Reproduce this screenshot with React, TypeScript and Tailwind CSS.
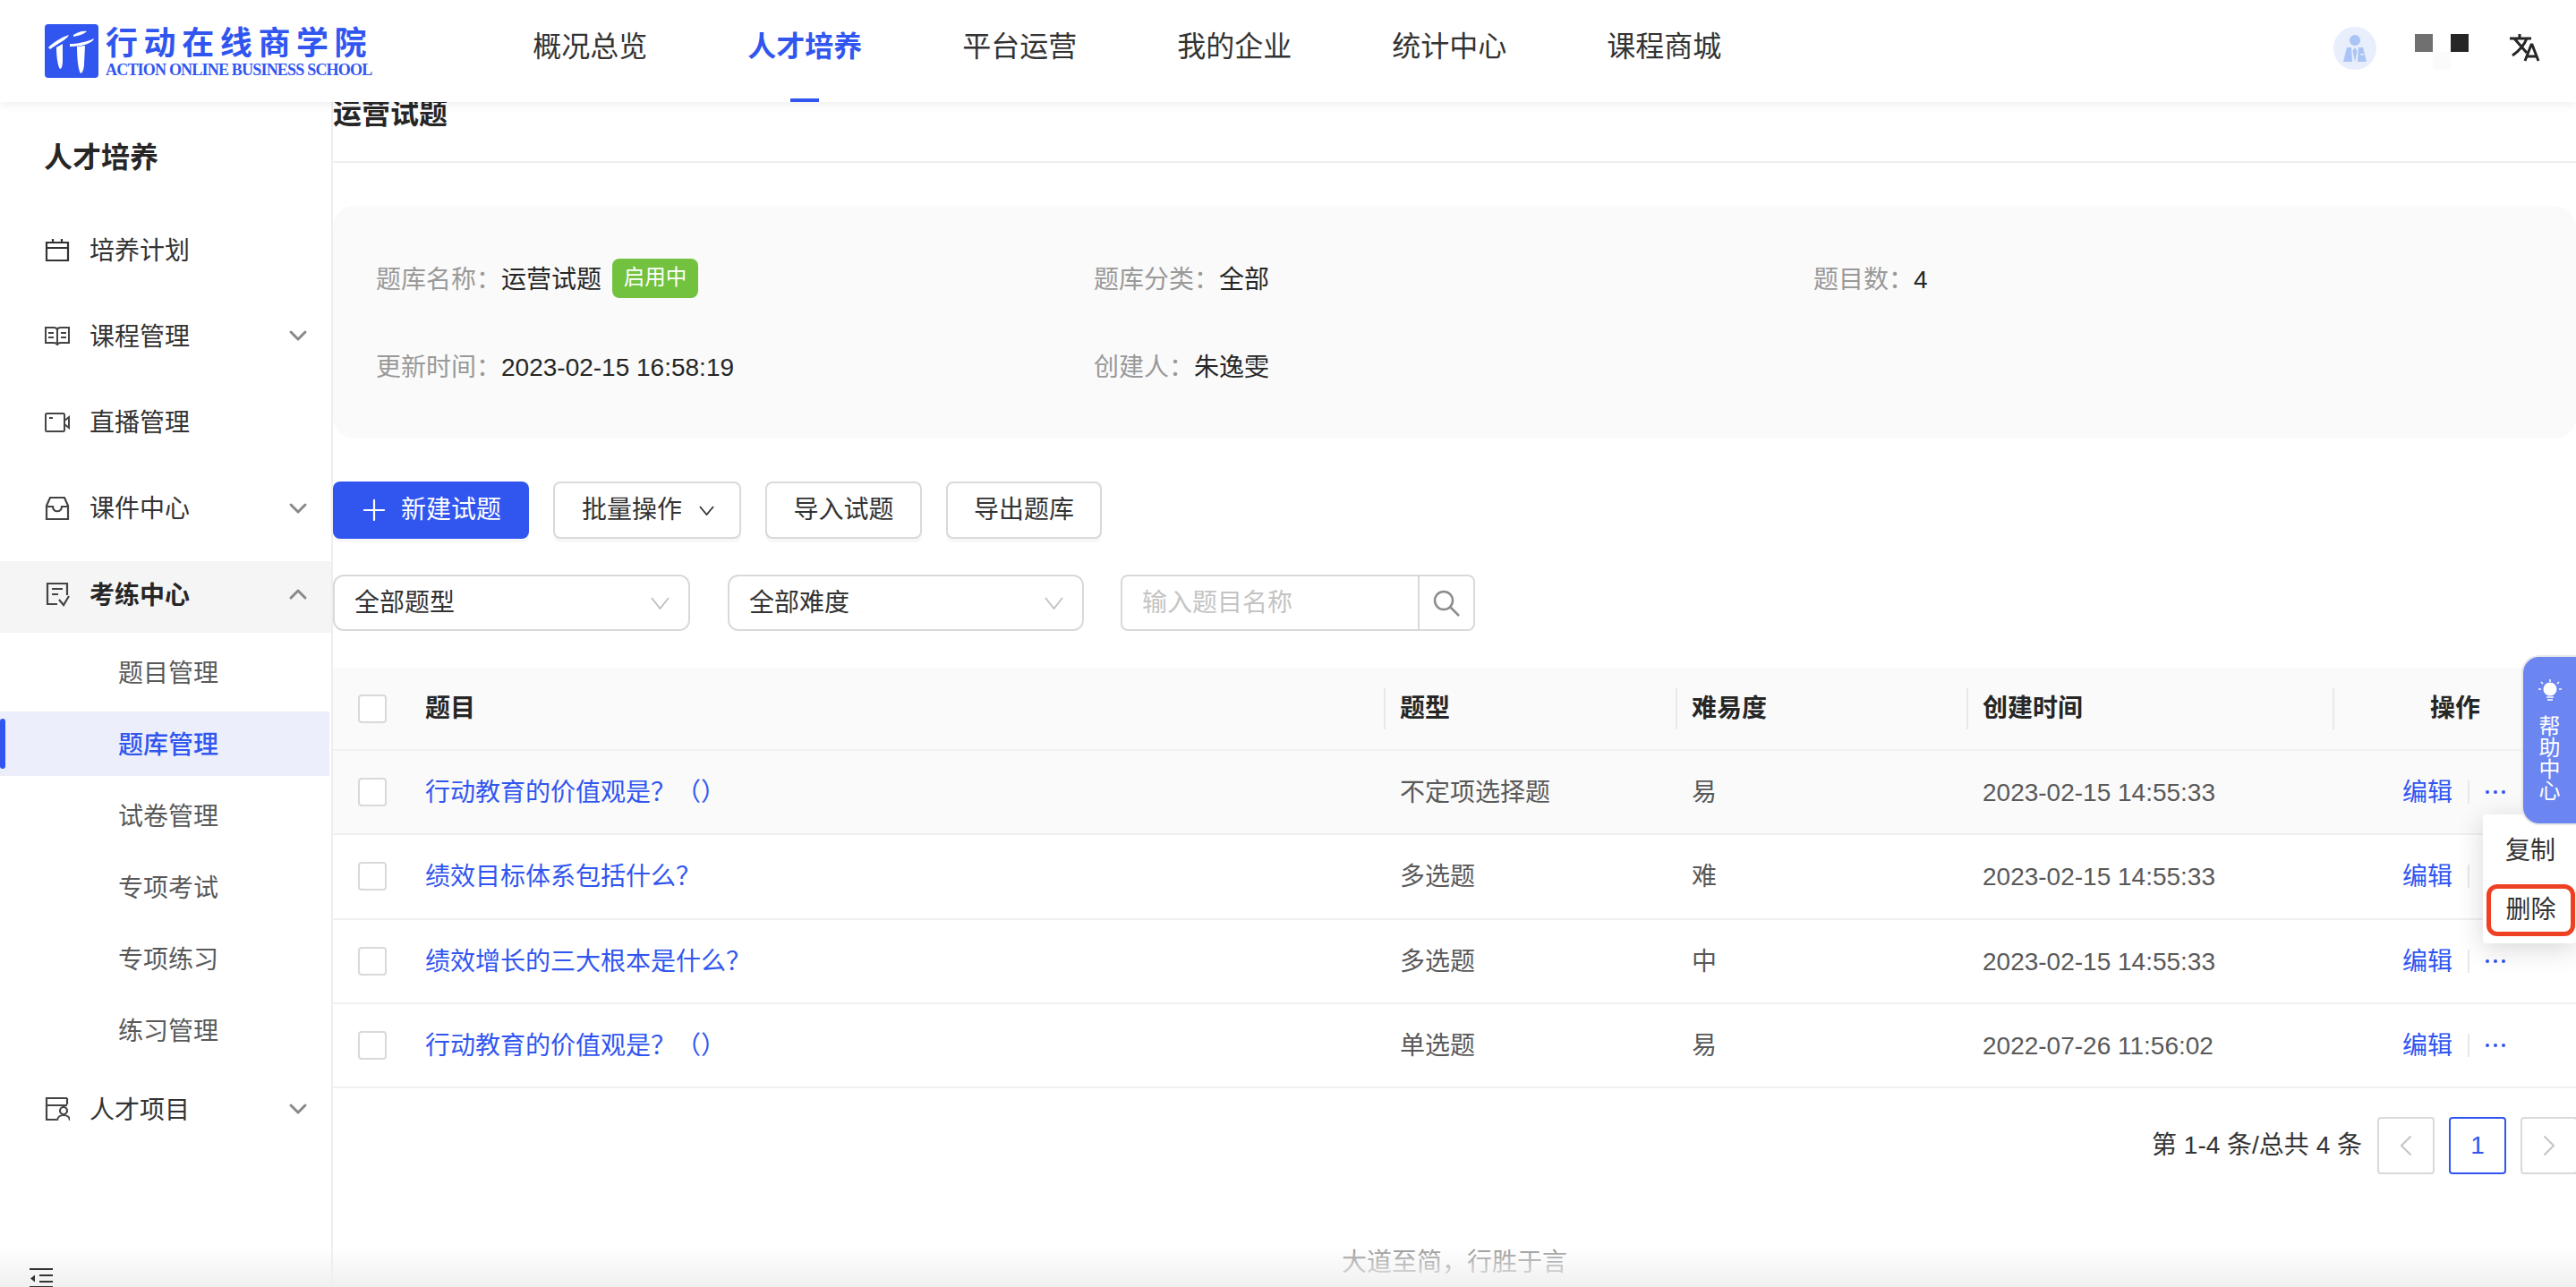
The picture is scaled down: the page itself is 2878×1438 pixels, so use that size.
import { ChevronDown, ChevronUp, ChevronLeft, ChevronRight, Plus } from "lucide-react";

const navItems = ["概况总览", "人才培养", "平台运营", "我的企业", "统计中心", "课程商城"];

const rows = [
  { title: "行动教育的价值观是？（）", type: "不定项选择题", level: "易", time: "2023-02-15 14:55:33", hover: true },
  { title: "绩效目标体系包括什么？", type: "多选题", level: "难", time: "2023-02-15 14:55:33" },
  { title: "绩效增长的三大根本是什么？", type: "多选题", level: "中", time: "2023-02-15 14:55:33" },
  { title: "行动教育的价值观是？（）", type: "单选题", level: "易", time: "2022-07-26 11:56:02" },
];

function LogoMark() {
  return (
    <svg width="60" height="60" viewBox="0 0 60 60" className="shrink-0">
      <rect width="60" height="60" rx="4" fill="#3156f0" />
      <path d="M4 26 C10 20 18 15 27 12 C25 17 14 22 6 28 Z" fill="#fff" />
      <path d="M28 22 C36 22 46 20 55 16 C54 21 42 25 28 25 Z" fill="#fff" />
      <path d="M32 12 C37 9 42 7 47 8 C44 11 38 13 32 14 Z" fill="#fff" />
      <path d="M13 26 L20 22 L20 40 C20 46 19 50 17 50 C15 48 13 38 13 26 Z" fill="#fff" />
      <path d="M36 25 L45 24 L44 44 C44 50 42 55 40 55 C37 50 36 36 36 25 Z" fill="#fff" />
    </svg>
  );
}

function CalendarIcon() {
  return (
    <svg width="28" height="28" viewBox="0 0 28 28" fill="none" stroke="#333" strokeWidth="2.2">
      <path d="M2 6h24v20H2z" />
      <path d="M2 12h24M9 2v5M19 2v5" />
    </svg>
  );
}

function BookIcon() {
  return (
    <svg width="28" height="28" viewBox="0 0 28 28" fill="none" stroke="#444" strokeWidth="2">
      <path d="M1 5h9c2 0 4 1 4 3v17c0-2-2-3-4-3H1zM27 5h-9c-2 0-4 1-4 3v17c0-2 2-3 4-3h9z" />
      <path d="M4 11h6M4 16h6M18 11h6M18 16h6" />
    </svg>
  );
}

function VideoIcon() {
  return (
    <svg width="28" height="28" viewBox="0 0 28 28" fill="none" stroke="#444" strokeWidth="2">
      <rect x="1" y="4" width="21" height="20" rx="1.5" />
      <path d="M22 12l5-4v12l-5-4M5 9h4" />
    </svg>
  );
}

function InboxIcon() {
  return (
    <svg width="28" height="28" viewBox="0 0 28 28" fill="none" stroke="#444" strokeWidth="2.2">
      <path d="M6 2h16l4 9v15H2V11z" />
      <path d="M2 12h7c0 7 10 7 10 0h7" />
    </svg>
  );
}

function ExamIcon() {
  return (
    <svg width="28" height="28" viewBox="0 0 28 28" fill="none" stroke="#444" strokeWidth="2.2">
      <path d="M25 15V2H3v23h11" />
      <path d="M8 8h12M8 14h7M16 20l5 6 6-10" />
    </svg>
  );
}

function TalentIcon() {
  return (
    <svg width="28" height="28" viewBox="0 0 28 28" fill="none" stroke="#444" strokeWidth="2.2">
      <path d="M25 2H2v24h11M25 2v7M2 10h23" />
      <circle cx="21" cy="16" r="4" />
      <path d="M14 27c0-8 14-8 14 0" />
    </svg>
  );
}

function CollapseIcon() {
  return (
    <svg width="26" height="26" viewBox="0 0 26 26" fill="#333" className="relative z-[6] shrink-0">
      <rect width="26" height="2" />
      <rect x="11" y="7" width="15" height="2" />
      <rect x="11" y="14" width="15" height="2" />
      <rect y="20" width="26" height="2" />
      <path d="M1 11.500l5-4v8z" />
    </svg>
  );
}

function AvatarIcon() {
  return (
    <div className="flex h-[48px] w-[48px] items-center justify-center rounded-full bg-[#e8eefc]">
      <svg width="28" height="30" viewBox="0 0 28 30" fill="#a9c4f5">
        <circle cx="14" cy="6" r="6" />
        <path d="M5 14h5l1 16H1zM18 14h5l4 16H17zM14 14l2.500 4-2.500 12-2.500-12z" />
        <rect x="20" y="21" width="4" height="1.500" fill="#e8eefc" />
      </svg>
    </div>
  );
}

function TranslateIcon() {
  return (
    <svg width="36" height="32" viewBox="0 0 36 32" fill="none" stroke="#262626" strokeWidth="3" className="shrink-0">
      <path d="M1 5h24M12 0v5M6 5l14 16M20 5C17 13 11 19 4 24" />
      <path d="M18 30l7-18h1l7 18M20 25h11" />
    </svg>
  );
}

function BulbIcon() {
  return (
    <svg width="26" height="28" viewBox="0 0 26 28" fill="none" stroke="#fff" className="shrink-0">
      <path d="M13 1v3M3 4l2 2M23 4l-2 2M0 12h3M23 12h3" strokeWidth="1.500" />
      <circle cx="13" cy="12" r="7.500" fill="#fff" stroke="none" />
      <path d="M9 21h8M10 24h6" strokeWidth="1.500" />
    </svg>
  );
}

function SearchIcon() {
  return (
    <svg width="30" height="30" viewBox="0 0 30 30" fill="none" stroke="#8c8c8c" strokeWidth="2.500">
      <circle cx="12" cy="12" r="10" />
      <path d="M19 19l10 10" />
    </svg>
  );
}

function Caret({ w, h, color }: { w: number; h: number; color: string }) {
  return (
    <svg width={w} height={h} viewBox={`0 0 ${w} ${h}`} fill="none" stroke={color} strokeWidth="1.800" className="shrink-0">
      <path d={`M1 1L${w / 2} ${h - 1}L${w - 1} 1`} />
    </svg>
  );
}

function MenuItem({
  icon,
  label,
  arrow,
  active,
}: {
  icon: React.ReactNode;
  label: string;
  arrow?: "down" | "up";
  active?: boolean;
}) {
  return (
    <div
      className={
        active
          ? "flex h-[80px] items-center bg-[#f5f5f5] pb-[6px] pl-[50px] pr-[21px] font-bold text-[#262626] mb-[8px]"
          : "flex h-[80px] items-center pb-[6px] pl-[50px] pr-[21px] text-[#333] mb-[16.33px]"
      }
    >
      {icon}
      <span className="ml-[22px] pt-[3px] leading-[40px]">{label}</span>
      {arrow === "down" && <ChevronDown className="ml-auto h-[32px] w-[32px] text-[#888]" strokeWidth={2.2} />}
      {arrow === "up" && <ChevronUp className="ml-auto h-[32px] w-[32px] text-[#888]" strokeWidth={2.2} />}
    </div>
  );
}

function SubItem({ label, active }: { label: string; active?: boolean }) {
  return (
    <div
      className={
        active
          ? "relative mb-[8px] mr-[2px] flex h-[72px] items-center bg-[#eceffb] pl-[132px] pt-[3px] font-medium text-[#3156f0]"
          : "mb-[8px] flex h-[72px] items-center pl-[132px] pt-[3px] text-[#595959]"
      }
    >
      {active && <div className="absolute left-0 top-[8px] h-[56px] w-[6px] rounded-full bg-[#3156f0]" />}
      {label}
    </div>
  );
}

function Sidebar() {
  return (
    <aside className="flex w-[372px] shrink-0 flex-col border-r-2 border-[#eeeeee] bg-white">
      <div className="pb-[44px] pl-[49px] pt-[40px] text-[32px] font-bold leading-[44px] text-[#262626]">人才培养</div>
      <MenuItem icon={<CalendarIcon />} label="培养计划" />
      <MenuItem icon={<BookIcon />} label="课程管理" arrow="down" />
      <MenuItem icon={<VideoIcon />} label="直播管理" />
      <MenuItem icon={<InboxIcon />} label="课件中心" arrow="down" />
      <MenuItem icon={<ExamIcon />} label="考练中心" arrow="up" active />
      <SubItem label="题目管理" />
      <SubItem label="题库管理" active />
      <SubItem label="试卷管理" />
      <SubItem label="专项考试" />
      <SubItem label="专项练习" />
      <SubItem label="练习管理" />
      <div className="mt-[7px]">
        <MenuItem icon={<TalentIcon />} label="人才项目" arrow="down" />
      </div>
      <div className="mt-auto -mb-[5px] pl-[33px]">
        <CollapseIcon />
      </div>
    </aside>
  );
}

function InfoField({ label, value, badge }: { label: string; value: string; badge?: string }) {
  return (
    <div className="flex h-[44px] items-center whitespace-nowrap">
      <span className="text-[#999999]">{label}：</span>
      <span className="text-[#262626]">{value}</span>
      {badge && (
        <span className="ml-[12px] flex h-[44px] w-[96px] -translate-y-[2px] items-center justify-center rounded-[8px] bg-[#72c240] text-[23.500px] text-white">
          {badge}
        </span>
      )}
    </div>
  );
}

function ToolButton({ children, className }: { children: React.ReactNode; className: string }) {
  return (
    <div
      className={`flex h-[64px] items-center rounded-[8px] border-2 border-[#d9d9d9] bg-white text-[#333] shadow-[0_4px_0_#f7f7f7] ${className}`}
    >
      {children}
    </div>
  );
}

function FilterSelect({ label, className }: { label: string; className: string }) {
  return (
    <div
      className={`flex h-[63px] items-center justify-between rounded-[12px] border-2 border-[#d9d9d9] bg-white pl-[22px] pr-[21px] pt-[1px] text-[#333] ${className}`}
    >
      {label}
      <Caret w={21} h={14} color="#bfbfbf" />
    </div>
  );
}

function Checkbox() {
  return <div className="h-[32px] w-[32px] rounded-[4px] border-2 border-[#d9d9d9] bg-white" />;
}

function HeadCell({ label, center }: { label: string; center?: boolean }) {
  return (
    <div className={center ? "flex h-[46px] items-center justify-center border-l-2 border-[#e8e8e8]" : "flex h-[46px] items-center border-l-2 border-[#e8e8e8] pl-[16px]"}>
      {label}
    </div>
  );
}

function Table() {
  return (
    <div className="mt-[41px]">
      <div className="grid h-[93px] grid-cols-[1174px_326px_325px_409px_272px] items-center border-b-2 border-[#f0f0f0] bg-[#fafafa] font-semibold text-[#262626]">
        <div className="flex items-center pl-[28px]">
          <Checkbox />
          <span className="ml-[43px]">题目</span>
        </div>
        <HeadCell label="题型" />
        <HeadCell label="难易度" />
        <HeadCell label="创建时间" />
        <HeadCell label="操作" center />
      </div>
      {rows.map((row, i) => (
        <div
          key={i}
          className={`grid h-[94.250px] grid-cols-[1174px_326px_325px_409px_272px] items-center border-b-2 border-[#f0f0f0] text-[#595959] ${row.hover ? "bg-[#fafafa]" : "bg-white"}`}
        >
          <div className="flex items-center pl-[28px]">
            <Checkbox />
            <span className="ml-[43px] pt-[2px] text-[#3156f0]">{row.title}</span>
          </div>
          <div className="pl-[18px] pt-[2px]">{row.type}</div>
          <div className="pl-[18px] pt-[2px]">{row.level}</div>
          <div className="pl-[18px] pt-[2px]">{row.time}</div>
          <div className="flex items-center pl-[78px] text-[#3156f0]">
            <span className="pt-[2px]">编辑</span>
            <span className="ml-[17px] h-[26px] w-[2px] bg-[#e8e8e8]" />
            <span className="ml-[18px] flex gap-[5px]">
              <span className="h-[4px] w-[4px] rounded-full bg-[#3156f0]" />
              <span className="h-[4px] w-[4px] rounded-full bg-[#3156f0]" />
              <span className="h-[4px] w-[4px] rounded-full bg-[#3156f0]" />
            </span>
          </div>
        </div>
      ))}
    </div>
  );
}

function Pagination() {
  return (
    <div className="-mr-[2px] mt-[32px] flex items-center justify-end gap-[16px]">
      <span className="mr-[1px] text-[#333]">第 1-4 条/总共 4 条</span>
      <div className="flex h-[64px] w-[64px] items-center justify-center rounded-[4px] border-2 border-[#d9d9d9]">
        <ChevronLeft className="h-[40px] w-[40px] text-[#c4c4c4]" strokeWidth={1.2} />
      </div>
      <div className="flex h-[64px] w-[64px] items-center justify-center rounded-[4px] border-2 border-[#3156f0] text-[#3156f0]">1</div>
      <div className="flex h-[64px] w-[64px] items-center justify-center rounded-[4px] border-2 border-[#d9d9d9]">
        <ChevronRight className="h-[40px] w-[40px] text-[#c4c4c4]" strokeWidth={1.2} />
      </div>
    </div>
  );
}

export default function App() {
  return (
    <div className="relative flex h-[1438px] w-[2878px] flex-col overflow-hidden bg-white font-['Liberation_Sans','Noto_Sans_CJK_SC',sans-serif] text-[28px]">
      <header className="relative z-10 flex h-[114px] shrink-0 items-center bg-white pl-[50px] pr-[39px] shadow-[0_2px_12px_rgba(0,0,0,0.08)]">
        <div className="flex items-center gap-[8px]">
          <LogoMark />
          <div className="flex flex-col">
            <span className="text-[36px] font-bold leading-[42px] tracking-[6.600px] text-[#3156f0]">行动在线商学院</span>
            <span className="whitespace-nowrap font-['Liberation_Serif',serif] text-[18px] font-bold leading-[16px] tracking-[-0.800px] text-[#3156f0]">
              ACTION ONLINE BUSINESS SCHOOL
            </span>
          </div>
        </div>
        <nav className="ml-[179px] flex gap-[112px] text-[32px] text-[#333]">
          {navItems.map((item) => (
            <div key={item} className="relative flex h-[114px] items-center pb-[10px]">
              <span className={item === "人才培养" ? "font-semibold text-[#3156f0]" : ""}>{item}</span>
              {item === "人才培养" && (
                <div className="absolute bottom-0 left-1/2 h-[4px] w-[32px] -translate-x-1/2 bg-[#3156f0]" />
              )}
            </div>
          ))}
        </nav>
        <div className="ml-auto flex items-center pb-[6px]">
          <AvatarIcon />
          <div className="ml-[43px] mt-[8px] grid grid-cols-[20px_20px_20px] grid-rows-[20px_20px]">
            <div className="bg-[#707070]" />
            <div />
            <div className="bg-[#262626]" />
            <div />
            <div className="bg-[#fbfbfb]" />
            <div />
          </div>
          <div className="ml-[45px]">
            <TranslateIcon />
          </div>
        </div>
      </header>

      <div className="flex min-h-0 flex-1">
        <Sidebar />
        <main className="min-w-0 flex-1">
          <div className="h-[68px] border-b-2 border-[#eeeef2] text-[32px] font-semibold leading-[26px] text-[#262626]">运营试题</div>

          <div className="mt-[48px] grid h-[260px] grid-cols-[802px_804px_1fr] content-start gap-y-[54px] rounded-[24px] bg-[#fafafa] pl-[48px] pt-[61px]">
            <InfoField label="题库名称" value="运营试题" badge="启用中" />
            <InfoField label="题库分类" value="全部" />
            <InfoField label="题目数" value="4" />
            <InfoField label="更新时间" value="2023-02-15 16:58:19" />
            <InfoField label="创建人" value="朱逸雯" />
          </div>

          <div className="mt-[48px] flex gap-[27px]">
            <div className="flex h-[64px] w-[219px] items-center gap-[11px] rounded-[8px] bg-[#3156f0] pl-[27px] text-white shadow-[0_4px_0_#f7f7f7]">
              <Plus className="h-[38px] w-[38px]" strokeWidth={1.4} />
              新建试题
            </div>
            <ToolButton className="w-[210px] gap-[19px] pl-[30px]">
              批量操作
              <Caret w={17} h={11} color="#333" />
            </ToolButton>
            <ToolButton className="w-[175px] justify-center">导入试题</ToolButton>
            <ToolButton className="w-[174px] justify-center">导出题库</ToolButton>
          </div>

          <div className="mt-[40px] flex">
            <FilterSelect label="全部题型" className="w-[399px]" />
            <FilterSelect label="全部难度" className="ml-[42px] w-[398px]" />
            <div className="ml-[41px] flex h-[63px] w-[396px] rounded-[8px] border-2 border-[#d9d9d9] bg-white">
              <div className="flex flex-1 items-center pl-[22px] pt-[1px] text-[#c4c4c4]">输入题目名称</div>
              <div className="flex w-[62px] items-center justify-center border-l-2 border-[#d9d9d9]">
                <SearchIcon />
              </div>
            </div>
          </div>

          <Table />
          <Pagination />
          <div className="mt-[83px] text-center leading-[32px] text-[#999999]">大道至简，行胜于言</div>
        </main>
      </div>

      <div className="absolute right-0 top-[910px] z-20 h-[144px] w-[104px] rounded-[4px] bg-white shadow-[0_6px_30px_rgba(0,0,0,0.16)]">
        <div className="flex h-[78px] items-center pl-[25px] pt-[3px] text-[#333]">复制</div>
        <div className="ml-[4px] flex h-[58px] w-[99px] items-center justify-center rounded-[12px] border-[5px] border-[#ee4124] text-[#333]">删除</div>
      </div>

      <div className="absolute right-0 top-[732px] z-30 flex h-[190px] w-[61px] flex-col items-center rounded-l-[20px] border-2 border-r-0 border-[#e8e8e8] bg-[#6b86f0] pt-[24px] text-[24px] leading-[24px] text-white">
        <BulbIcon />
        <div className="mt-[14px] w-[24px] text-center">帮助中心</div>
      </div>

      <div className="pointer-events-none absolute bottom-0 left-0 right-0 z-[5] h-[45px] bg-gradient-to-b from-transparent to-[#f0f0f0]" />
    </div>
  );
}
